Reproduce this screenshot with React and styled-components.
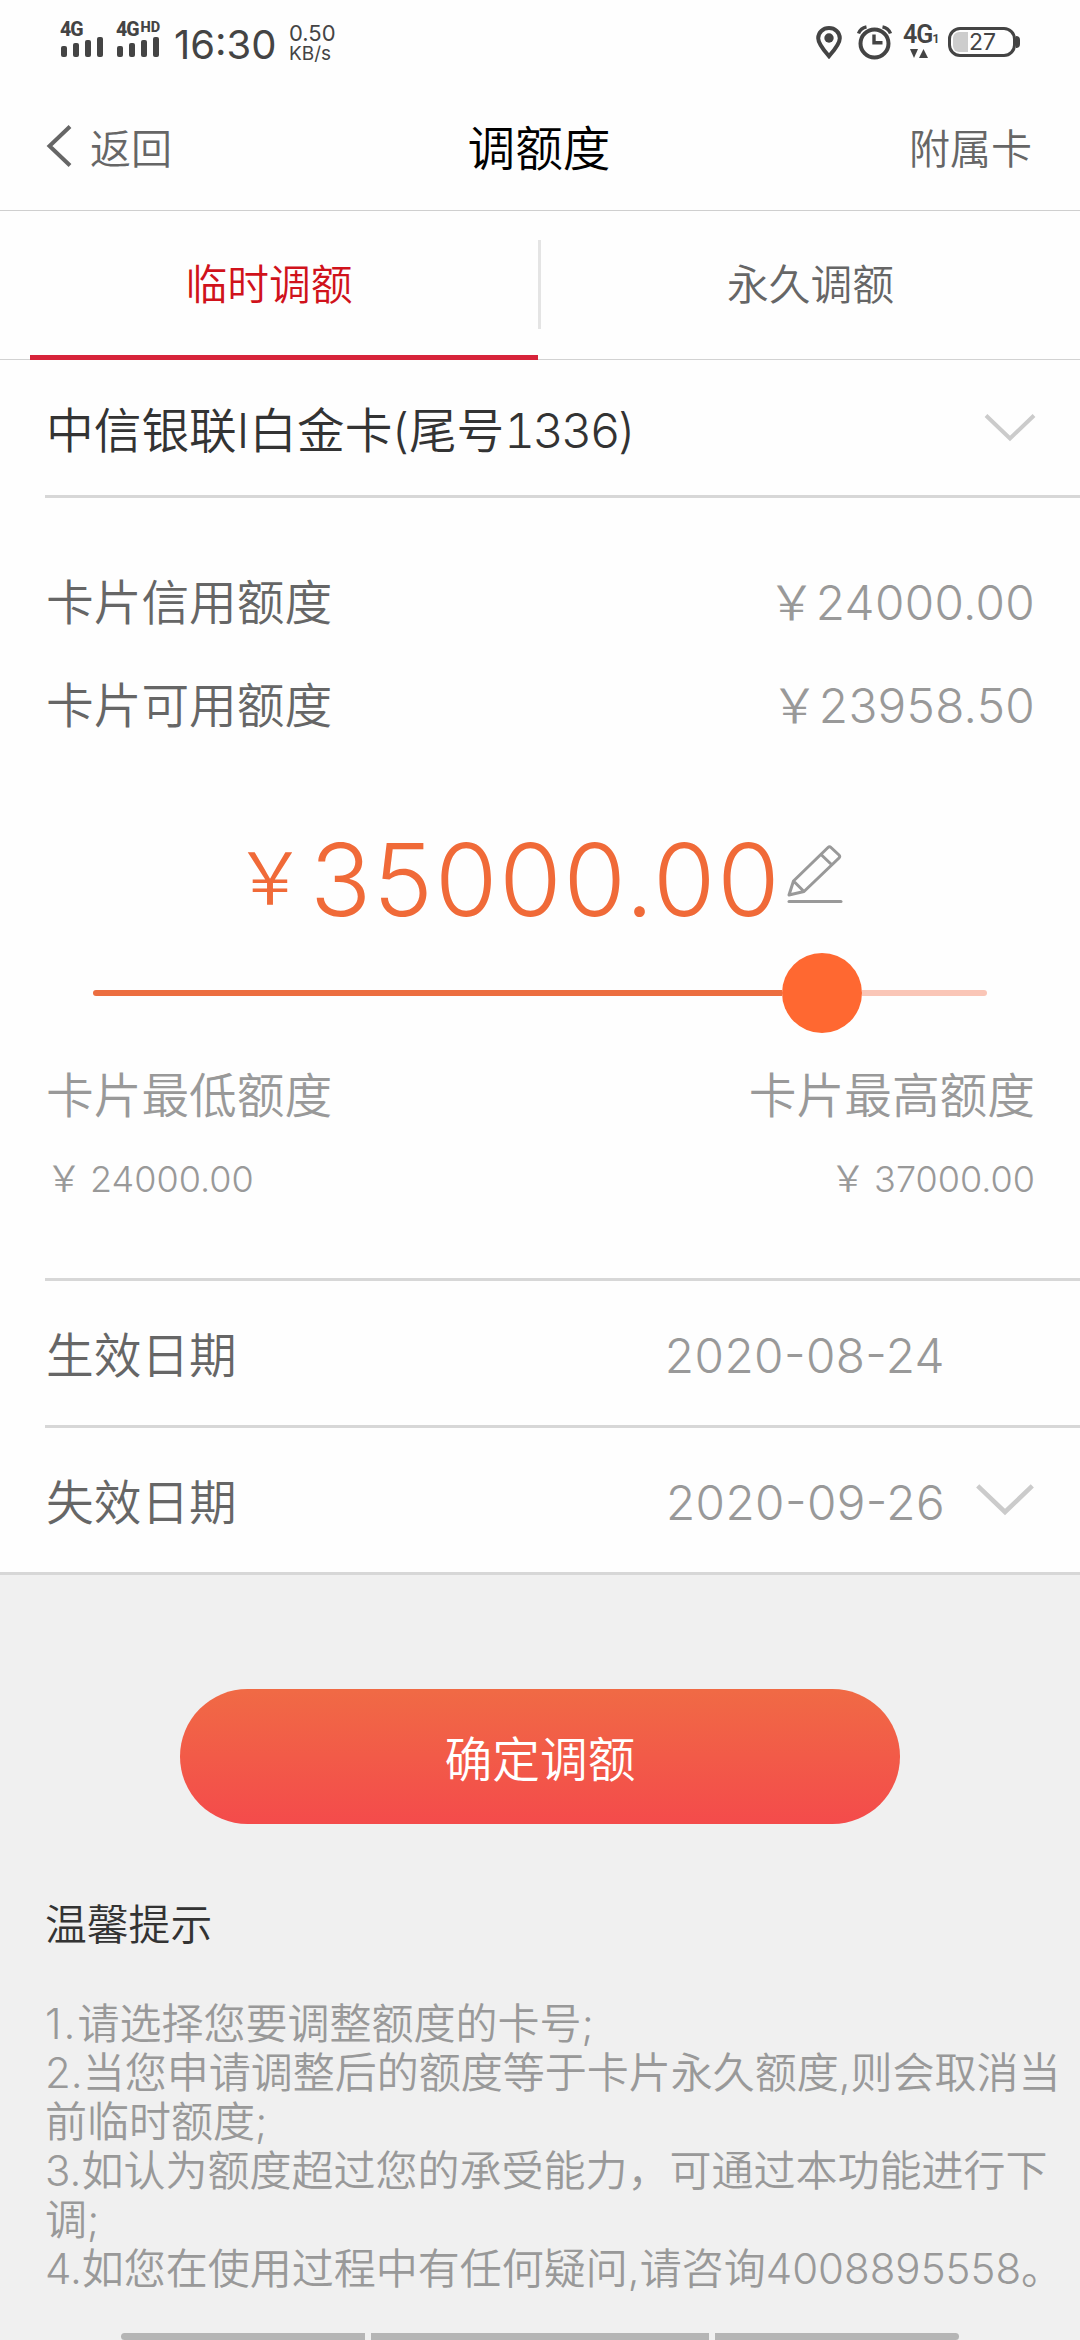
import styled, { createGlobalStyle, css } from "styled-components";

const tips = [
  "请选择您要调整额度的卡号;",
  "当您申请调整后的额度等于卡片永久额度,则会取消当前临时额度;",
  "如认为额度超过您的承受能力，可通过本功能进行下调;",
  "如您在使用过程中有任何疑问,请咨询4008895558。",
];

const limits = [
  { label: "卡片信用额度", value: "24000.00" },
  { label: "卡片可用额度", value: "23958.50" },
];

function Signal({ hd }) {
  return (
    <SignalGroup>
      <SignalLabel>
        4G{hd && <sup>HD</sup>}
      </SignalLabel>
      <svg width="43" height="20" viewBox="0 0 43 20" fill="#444">
        <rect x="1" y="9" width="6" height="11" rx="2" />
        <rect x="13" y="6" width="6" height="14" rx="2" />
        <rect x="25" y="3" width="6" height="17" rx="2" />
        <rect x="37" y="0" width="6" height="20" rx="2" />
      </svg>
    </SignalGroup>
  );
}

function Chevron({ width, height }) {
  return (
    <svg width={width} height={height} viewBox="0 0 52 29" fill="none">
      <path d="M2 2.5 L26 25.5 L50 2.5" stroke="#cbcbcb" strokeWidth="4" />
    </svg>
  );
}

function StatusBar() {
  return (
    <StatusRow>
      <Signal />
      <Signal hd />
      <Clock>16:30</Clock>
      <NetSpeed>
        <span>0.50</span>
        <small>KB/s</small>
      </NetSpeed>
      <StatusIcons>
        <svg width="26" height="34" viewBox="0 0 26 34">
          <path
            d="M13 3C7 3 2.2 7.4 2.2 13.2C2.2 19 8.4 25.8 13 31.2C17.6 25.8 23.8 19 23.8 13.2C23.8 7.4 19 3 13 3Z"
            fill="none"
            stroke="#444"
            strokeWidth="4"
          />
          <circle cx="13" cy="13" r="4.7" fill="#444" />
        </svg>
        <AlarmIcon width="35" height="35" viewBox="0 0 35 35">
          <circle cx="17.5" cy="18.5" r="14" strokeWidth="4" />
          <path d="M17 9.5V17.8H25.5" strokeWidth="3.4" />
          <path d="M1.5 8.5Q3.5 3 9.5 1.8" strokeWidth="3.4" />
          <path d="M33.5 8.5Q31.5 3 25.5 1.8" strokeWidth="3.4" />
        </AlarmIcon>
        <DataType>
          <span>
            4G<small>1</small>
          </span>
          <svg width="18" height="9" viewBox="0 0 18 9" fill="#444">
            <path d="M0 0H8L4 9Z" />
            <path d="M9 9H18L13.5 0Z" />
          </svg>
        </DataType>
        <Battery>
          <BatteryBody>
            <BatteryLevel />
            27
          </BatteryBody>
          <BatteryTip />
        </Battery>
      </StatusIcons>
    </StatusRow>
  );
}

export default function App() {
  return (
    <Page>
      <GlobalStyle />
      <StatusBar />
      <Header>
        <BackButton>
          <svg width="26" height="42" viewBox="0 0 26 42" fill="none">
            <path d="M24 1.5L3.5 21L24 40.5" stroke="#666" strokeWidth="4" />
          </svg>
          返回
        </BackButton>
        <Title>调额度</Title>
        <HeaderLink>附属卡</HeaderLink>
      </Header>
      <Tabs>
        <Tab $active>临时调额</Tab>
        <TabDivider />
        <Tab>永久调额</Tab>
      </Tabs>
      <CardSelect>
        <span>
          中信银联I白金卡(尾号<CardDigits>1336</CardDigits>)
        </span>
        <Chevron width={52} height={29} />
      </CardSelect>
      <LimitPanel>
        {limits.map((limit) => (
          <LimitRow key={limit.label}>
            <span>{limit.label}</span>
            <LimitValue>
              <i>￥</i>
              {limit.value}
            </LimitValue>
          </LimitRow>
        ))}
        <Amount>
          <Yen>￥</Yen>
          <AmountValue>35000.00</AmountValue>
          <svg width="56" height="60" viewBox="0 0 56 60" fill="none" stroke="#999">
            <path
              d="M2 51L6.5 37L41 3.5Q42.5 2 44 3.5L52 11Q53.5 12.5 52 14L17 47.5Z M6.5 37L17 47.5 M34 10.5L45 21"
              strokeWidth="3"
              strokeLinejoin="round"
            />
            <path d="M2 57.5H54" strokeWidth="3" strokeLinecap="round" />
          </svg>
        </Amount>
        <Slider>
          <SliderFill />
          <SliderKnob />
          <SliderRest />
        </Slider>
        <RangeLabels>
          <span>卡片最低额度</span>
          <span>卡片最高额度</span>
        </RangeLabels>
        <RangeValues>
          <span>
            <i>￥</i>24000.00
          </span>
          <span>
            <i>￥</i>37000.00
          </span>
        </RangeValues>
      </LimitPanel>
      <DateRow>
        <span>生效日期</span>
        <DateValue>2020-08-24</DateValue>
        <ChevronSlot />
      </DateRow>
      <DateRow $last>
        <span>失效日期</span>
        <DateValue>2020-09-26</DateValue>
        <ChevronSlot>
          <Chevron width={60} height={33} />
        </ChevronSlot>
      </DateRow>
      <Footer>
        <SubmitButton>确定调额</SubmitButton>
        <TipsTitle>温馨提示</TipsTitle>
        <TipsList>
          {tips.map((tip, index) => (
            <li key={tip}>
              <TipNumber $narrow={index === 0}>{index + 1}.</TipNumber>
              {tip}
            </li>
          ))}
        </TipsList>
        <NavBar>
          <NavPill $width={244} $side="left" />
          <NavPill $width={338} />
          <NavPill $width={244} $side="right" />
        </NavBar>
      </Footer>
    </Page>
  );
}

const GlobalStyle = createGlobalStyle`
  * {
    box-sizing: border-box;
    margin: 0;
    padding: 0;
  }

  body {
    background: #fefefe;
    font-family: Inter, "Noto Sans CJK SC", sans-serif;
    font-weight: 350;
  }

  i {
    font-style: normal;
  }
`;

const Page = styled.div`
  width: 1080px;
  height: 2340px;
  display: flex;
  flex-direction: column;
  overflow: hidden;
  color: #666;
  font-size: 47.7px;
  white-space: nowrap;

  > * {
    flex-shrink: 0;
  }
`;

const StatusRow = styled.div`
  height: 84px;
  padding: 0 60px;
  display: flex;
  align-items: flex-start;
  color: #444;
  font-weight: 400;
`;

const SignalGroup = styled.div`
  width: 56px;
  padding-top: 21px;
  display: flex;
  flex-direction: column;
`;

const SignalLabel = styled.span`
  height: 16px;
  font-family: Roboto, sans-serif;
  font-size: 19.5px;
  font-weight: 800;
  line-height: 17px;
  letter-spacing: -1px;

  sup {
    margin-left: 2px;
    font-size: 14.5px;
    line-height: 0;
    vertical-align: 4px;
    letter-spacing: 0;
  }
`;

const Clock = styled.span`
  width: 113px;
  padding: 20px 0 0 2px;
  font-size: 40px;
  line-height: 49px;
`;

const NetSpeed = styled.div`
  padding: 22px 0 0 4px;
  display: flex;
  flex-direction: column;
  font-size: 22px;
  line-height: 22px;

  small {
    font-size: 19px;
    line-height: 19px;
  }
`;

const StatusIcons = styled.div`
  margin-left: auto;
  padding-top: 25px;
  display: flex;
  align-items: flex-start;
`;

const AlarmIcon = styled.svg`
  margin: 0 11px 0 15px;
  fill: none;
  stroke: #444;
`;

const DataType = styled.div`
  width: 33px;
  height: 34px;
  margin-right: 12px;
  display: flex;
  flex-direction: column;
  font-family: Roboto, sans-serif;
  font-size: 25px;
  font-weight: 600;
  line-height: 19px;
  letter-spacing: -1px;

  small {
    font-size: 13px;
    line-height: 0;
  }

  svg {
    margin: 5px 0 0 7px;
  }
`;

const Battery = styled.div`
  display: flex;
  align-items: center;
  padding-top: 2px;
`;

const BatteryBody = styled.div`
  width: 68px;
  height: 30px;
  padding-left: 2px;
  display: flex;
  align-items: center;
  border: 3px solid #444;
  border-radius: 12px;
  font-size: 23px;
  line-height: 24px;
`;

const BatteryLevel = styled.div`
  width: 15px;
  height: 20px;
  margin-right: 1px;
  border-radius: 6px 0 0 6px;
  background: #cdcdcd;
`;

const BatteryTip = styled.div`
  width: 4px;
  height: 12px;
  border-radius: 0 4px 4px 0;
  background: #444;
`;

const Header = styled.header`
  height: 127px;
  padding: 0 48px 3px 46px;
  display: grid;
  grid-template-columns: 1fr auto 1fr;
  align-items: center;
  border-bottom: 1px solid #cfcfcf;
  font-size: 41px;
`;

const BackButton = styled.div`
  display: flex;
  align-items: center;
  gap: 18px;
`;

const Title = styled.h1`
  color: #000;
  font-size: 47.7px;
  font-weight: 350;
`;

const HeaderLink = styled.span`
  justify-self: end;
`;

const Tabs = styled.nav`
  height: 149px;
  padding-left: 30px;
  display: flex;
  border-bottom: 1px solid #d2d2d2;
`;

const Tab = styled.div`
  width: ${({ $active }) => ($active ? "508px" : "539px")};
  height: 149px;
  padding-right: ${({ $active }) => ($active ? "30px" : "0")};
  padding-bottom: 2px;
  display: flex;
  align-items: center;
  justify-content: center;
  border-bottom: 5px solid transparent;
  font-size: 41.8px;
  ${({ $active }) =>
    $active &&
    css`
      color: #d0121b;
      border-color: #d7233a;
    `}
`;

const TabDivider = styled.div`
  width: 3px;
  height: 89px;
  margin-top: 29px;
  background: #e4e4e4;
`;

const CardSelect = styled.div`
  height: 138px;
  margin-left: 45px;
  padding: 0 44px 0 1px;
  display: flex;
  align-items: center;
  justify-content: space-between;
  border-bottom: 3px solid #d7d7d7;
  color: #333;
`;

const CardDigits = styled.span`
  font-variant-numeric: tabular-nums;
  letter-spacing: -0.05em;
`;

const LimitPanel = styled.section`
  height: 783px;
  margin-left: 45px;
  padding: 50px 45px 0 1px;
  display: flex;
  flex-direction: column;
  border-bottom: 3px solid #d7d7d7;
`;

const LimitRow = styled.div`
  height: 103px;
  display: flex;
  align-items: center;
  justify-content: space-between;
`;

const LimitValue = styled.span`
  color: #999;
  letter-spacing: 0.3px;
`;

const Amount = styled.div`
  height: 180px;
  padding: 73px 0 0 188px;
  display: flex;
  align-items: flex-start;
  color: #f06a38;

  svg {
    margin: 17px 0 0 10px;
  }
`;

const Yen = styled.span`
  width: 76px;
  margin-top: 8px;
  font-size: 72px;
  line-height: 86px;
`;

const AmountValue = styled.span`
  width: 467px;
  font-size: 101px;
  line-height: 104px;
  letter-spacing: 1.9px;
`;

const Slider = styled.div`
  width: 894px;
  height: 80px;
  margin: 19px 0 0 47px;
  display: flex;
  align-items: center;
`;

const SliderFill = styled.div`
  width: 689px;
  height: 6px;
  border-radius: 3px 0 0 3px;
  background: #ec6e40;
`;

const SliderKnob = styled.div`
  width: 80px;
  height: 80px;
  border-radius: 50%;
  background: #ff6831;
`;

const SliderRest = styled.div`
  flex: 1;
  height: 6px;
  border-radius: 0 3px 3px 0;
  background: #fac6b7;
`;

const RangeLabels = styled.div`
  height: 70px;
  margin-top: 24px;
  display: flex;
  align-items: center;
  justify-content: space-between;
  color: #999;
`;

const RangeValues = styled.div`
  height: 60px;
  margin-top: 19px;
  display: flex;
  align-items: center;
  justify-content: space-between;
  color: #999;
  font-size: 36px;

  i {
    margin-right: 8px;
  }
`;

const DateRow = styled.div`
  height: 147px;
  margin-left: ${({ $last }) => ($last ? "0" : "45px")};
  padding: 0 45px 2px ${({ $last }) => ($last ? "46px" : "1px")};
  display: flex;
  align-items: center;
  border-bottom: 3px solid #d7d7d7;
`;

const DateValue = styled.span`
  margin-left: auto;
  padding-top: 7px;
  color: #999;
  font-feature-settings: "case";
  letter-spacing: 0.4px;
`;

const ChevronSlot = styled.div`
  width: 90px;
  display: flex;
  justify-content: flex-end;
`;

const Footer = styled.section`
  height: 765px;
  padding-top: 114px;
  display: flex;
  flex-direction: column;
  background: #f0f0f0;
`;

const SubmitButton = styled.button`
  width: 720px;
  height: 135px;
  flex-shrink: 0;
  align-self: center;
  border: none;
  border-radius: 68px;
  background: linear-gradient(#f06a45, #f44b4b);
  color: #fff;
  font: inherit;
`;

const TipsTitle = styled.h2`
  margin-top: 71px;
  padding-left: 45px;
  color: #333;
  font-size: 41.8px;
  font-weight: 350;
  line-height: 60px;
`;

const TipsList = styled.ul`
  padding: 44px 10px 0 45px;
  list-style: none;
  color: #999;
  font-size: 42px;
  line-height: 49px;
  white-space: normal;
  word-break: break-all;
`;

const TipNumber = styled.span`
  letter-spacing: ${({ $narrow }) => ($narrow ? "2px" : "0")};
`;

const NavBar = styled.div`
  margin-top: auto;
  display: flex;
  justify-content: center;
  gap: 6px;
`;

const NavPill = styled.div`
  width: ${({ $width }) => $width}px;
  height: 7px;
  border-radius: ${({ $side }) =>
    $side === "left" ? "4px 0 0 4px" : $side === "right" ? "0 4px 4px 0" : "0"};
  background: #b5b5b5;
`;
